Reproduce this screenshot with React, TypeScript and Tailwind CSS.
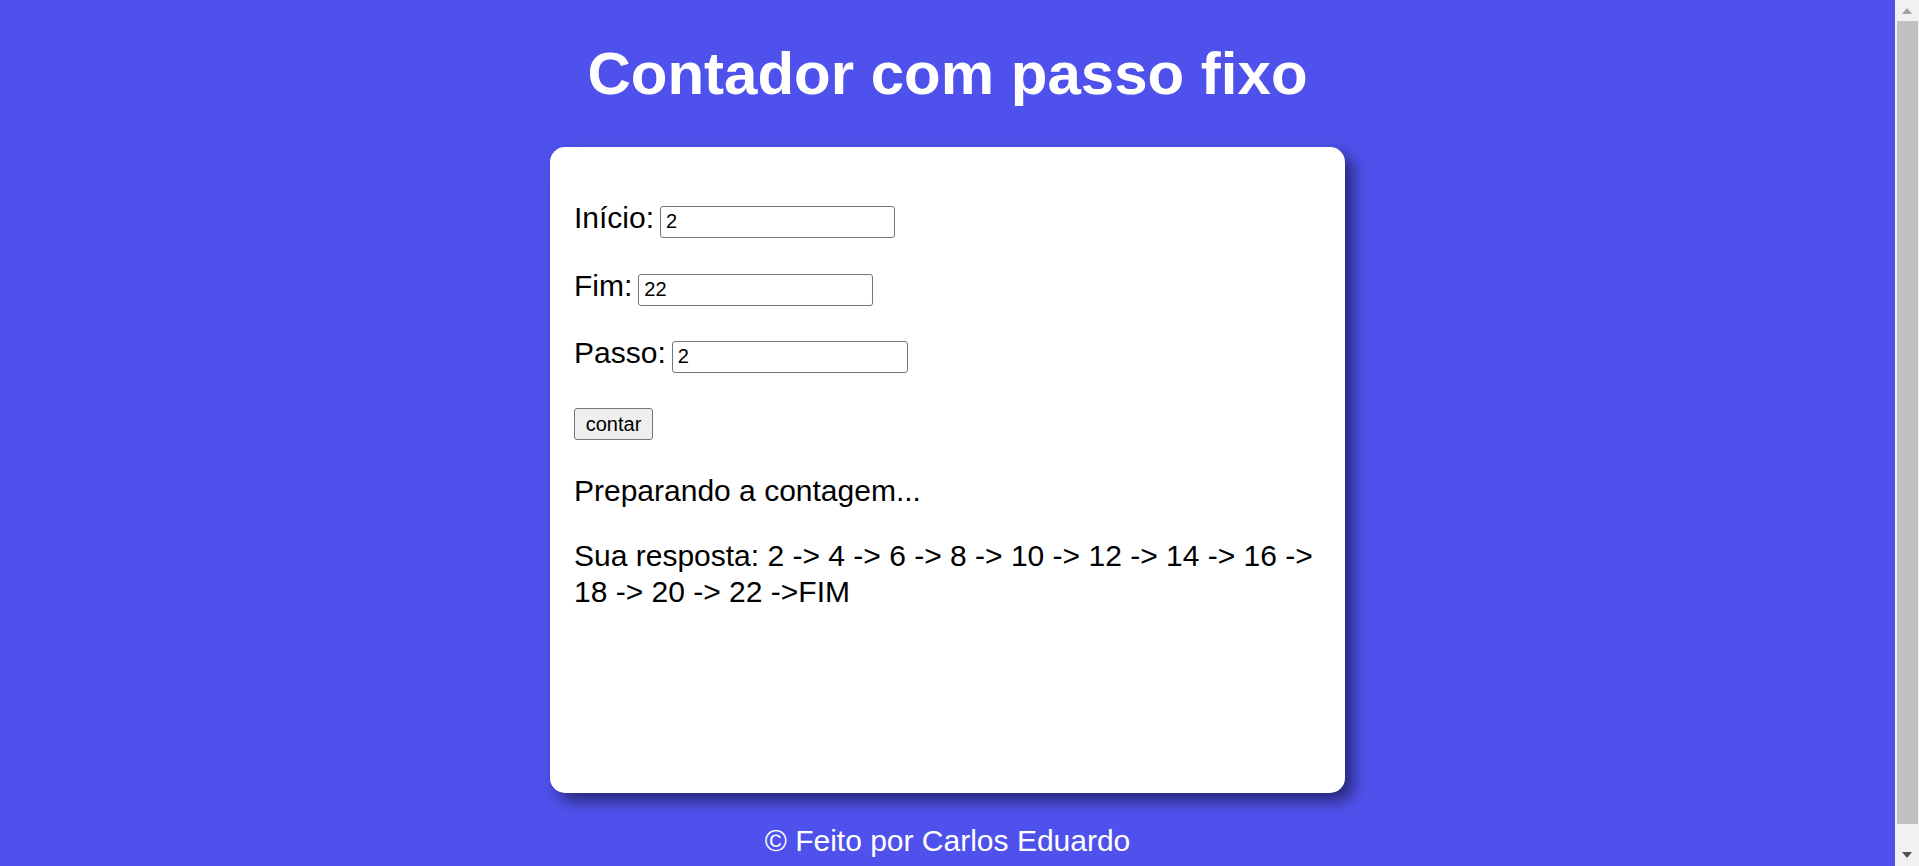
import { useState } from "react"

const Campo = ({
	label,
	valor,
	largura
}: {
	label: string
	valor: string
	largura: string
}) => {
	const [v, setV] = useState(valor)
	return (
		<div className="flex items-baseline h-[36px]">
			<label>{label}</label>
			<input
				type="text"
				value={v}
				onChange={(e) => setV(e.target.value)}
				className={`ml-[6px] h-[32px] ${largura} rounded-[3px] border border-[#767676] bg-white px-[5px] text-[20px] leading-[23px] text-black outline-none`}
			/>
		</div>
	)
}

// barra de rolagem do navegador (aparece no print original)
const BarraRolagem = () => (
	<aside className="flex h-[866px] w-[24px] shrink-0 flex-col bg-[#f1f1f1]">
		<div className="flex h-[21px] items-center justify-center">
			<svg width="10" height="6" viewBox="0 0 10 6">
				<path d="M0 6 L5 0 L10 6 Z" fill="#a3a3a3" />
			</svg>
		</div>
		<div className="ml-[2px] mr-[1px] h-[803px] bg-[#c1c1c1]" />
		<div className="flex flex-1 items-end justify-center pb-[8px]">
			<svg width="10" height="6" viewBox="0 0 10 6">
				<path d="M0 0 L10 0 L5 6 Z" fill="#505050" />
			</svg>
		</div>
	</aside>
)

const App = () => {
	return (
		<div className="flex min-h-[888px] bg-[#4f51ec] font-['Liberation_Sans',Arial,sans-serif] text-[30px] leading-[34.5px] text-black">
			<div className="flex flex-1 flex-col items-center">
				<h1 className="mt-[39px] text-[60px] font-bold leading-[69px] text-white">
					Contador com passo fixo
				</h1>
				<main className="mt-[39px] h-[646px] w-[795px] rounded-[15px] bg-white px-[24px] pt-[54px] shadow-[8px_8px_15px_rgba(0,0,0,0.5)]">
					<Campo label="Início:" valor="2" largura="w-[235px]" />
					<div className="mt-[32px]">
						<Campo label="Fim:" valor="22" largura="w-[235px]" />
					</div>
					<div className="mt-[31px]">
						<Campo label="Passo:" valor="2" largura="w-[236px]" />
					</div>
					<button
						type="button"
						className="mt-[36px] flex h-[32px] w-[79px] items-center justify-center rounded-[3px] border border-[#767676] bg-[#efefef] text-[20px] leading-[23px] text-black"
					>
						contar
					</button>
					<p className="mt-[34px]">Preparando a contagem...</p>
					<p className="mt-[29px] leading-[36px]">
						Sua resposta: 2 -&gt; 4 -&gt; 6 -&gt; 8 -&gt; 10 -&gt; 12 -&gt; 14 -&gt; 16
						-&gt; 18 -&gt; 20 -&gt; 22 -&gt;FIM
					</p>
				</main>
				<footer className="mt-[31px] text-white">© Feito por Carlos Eduardo</footer>
			</div>
			<BarraRolagem />
		</div>
	)
}

export default App
